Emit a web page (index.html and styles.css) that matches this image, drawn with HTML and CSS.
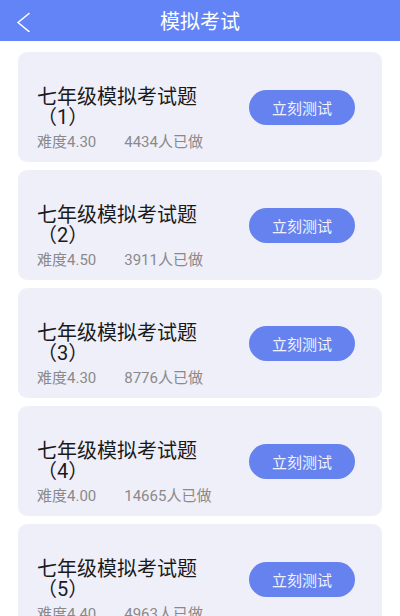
FILE: index.html
```html
<!DOCTYPE html>
<html lang="zh">
<head>
<meta charset="utf-8">
<title>模拟考试</title>
<link rel="stylesheet" href="styles.css">
</head>
<body>
<header class="topbar">
  <svg class="back" width="16" height="20" viewBox="0 0 16 20"><polyline points="13,1.5 2,10.5 13,19.5" fill="none" stroke="#fff" stroke-width="1.6" stroke-linecap="round" stroke-linejoin="round"/></svg>
  <h1 class="title">模拟考试</h1>
</header>
<main class="list">
  <div class="card">
    <div class="info">
      <div class="name">七年级模拟考试题（1）</div>
      <div class="meta"><span>难度4.30</span><span>4434人已做</span></div>
    </div>
    <button class="btn">立刻测试</button>
  </div>
  <div class="card">
    <div class="info">
      <div class="name">七年级模拟考试题（2）</div>
      <div class="meta"><span>难度4.50</span><span>3911人已做</span></div>
    </div>
    <button class="btn">立刻测试</button>
  </div>
  <div class="card">
    <div class="info">
      <div class="name">七年级模拟考试题（3）</div>
      <div class="meta"><span>难度4.30</span><span>8776人已做</span></div>
    </div>
    <button class="btn">立刻测试</button>
  </div>
  <div class="card">
    <div class="info">
      <div class="name">七年级模拟考试题（4）</div>
      <div class="meta"><span>难度4.00</span><span>14665人已做</span></div>
    </div>
    <button class="btn">立刻测试</button>
  </div>
  <div class="card">
    <div class="info">
      <div class="name">七年级模拟考试题（5）</div>
      <div class="meta"><span>难度4.40</span><span>4963人已做</span></div>
    </div>
    <button class="btn">立刻测试</button>
  </div>
</main>
</body>
</html>
```
FILE: styles.css
```css
html, body {
  margin: 0;
  padding: 0;
  background: #fff;
  font-family: "Noto Sans CJK SC", "Noto Sans", sans-serif;
  overflow: hidden;
}
.topbar {
  position: relative;
  height: 41px;
  background: #6384f7;
  display: flex;
  align-items: center;
  justify-content: center;
}
.back {
  position: absolute;
  left: 16px;
  top: 12px;
}
.title {
  margin: 0;
  font-size: 20px;
  font-weight: 400;
  color: #fff;
  line-height: 41px;
}
.list {
  padding: 11px 18px 0;
  display: flex;
  flex-direction: column;
  gap: 8px;
}
.card {
  height: 110px;
  box-sizing: border-box;
  background: #efeffa;
  border-radius: 9px;
  display: flex;
  align-items: center;
  padding: 0 27px 0 19px;
}
.info {
  flex: 1;
  align-self: flex-start;
  padding-top: 35px;
}
.name {
  width: 172px;
  font-family: "Roboto", "Noto Sans CJK SC", sans-serif;
  font-size: 20px;
  line-height: 20px;
  color: #1a1a1a;
}
.meta {
  margin-top: 6px;
  font-family: "Roboto", "Noto Sans CJK SC", sans-serif;
  font-size: 15px;
  line-height: 18px;
  color: #8a8a8a;
  display: flex;
  gap: 28px;
}
.btn {
  width: 106px;
  height: 35px;
  border: none;
  border-radius: 18px;
  background: #6682ef;
  color: #f0f3ff;
  font-family: inherit;
  font-size: 15px;
  padding: 0;
}
```
